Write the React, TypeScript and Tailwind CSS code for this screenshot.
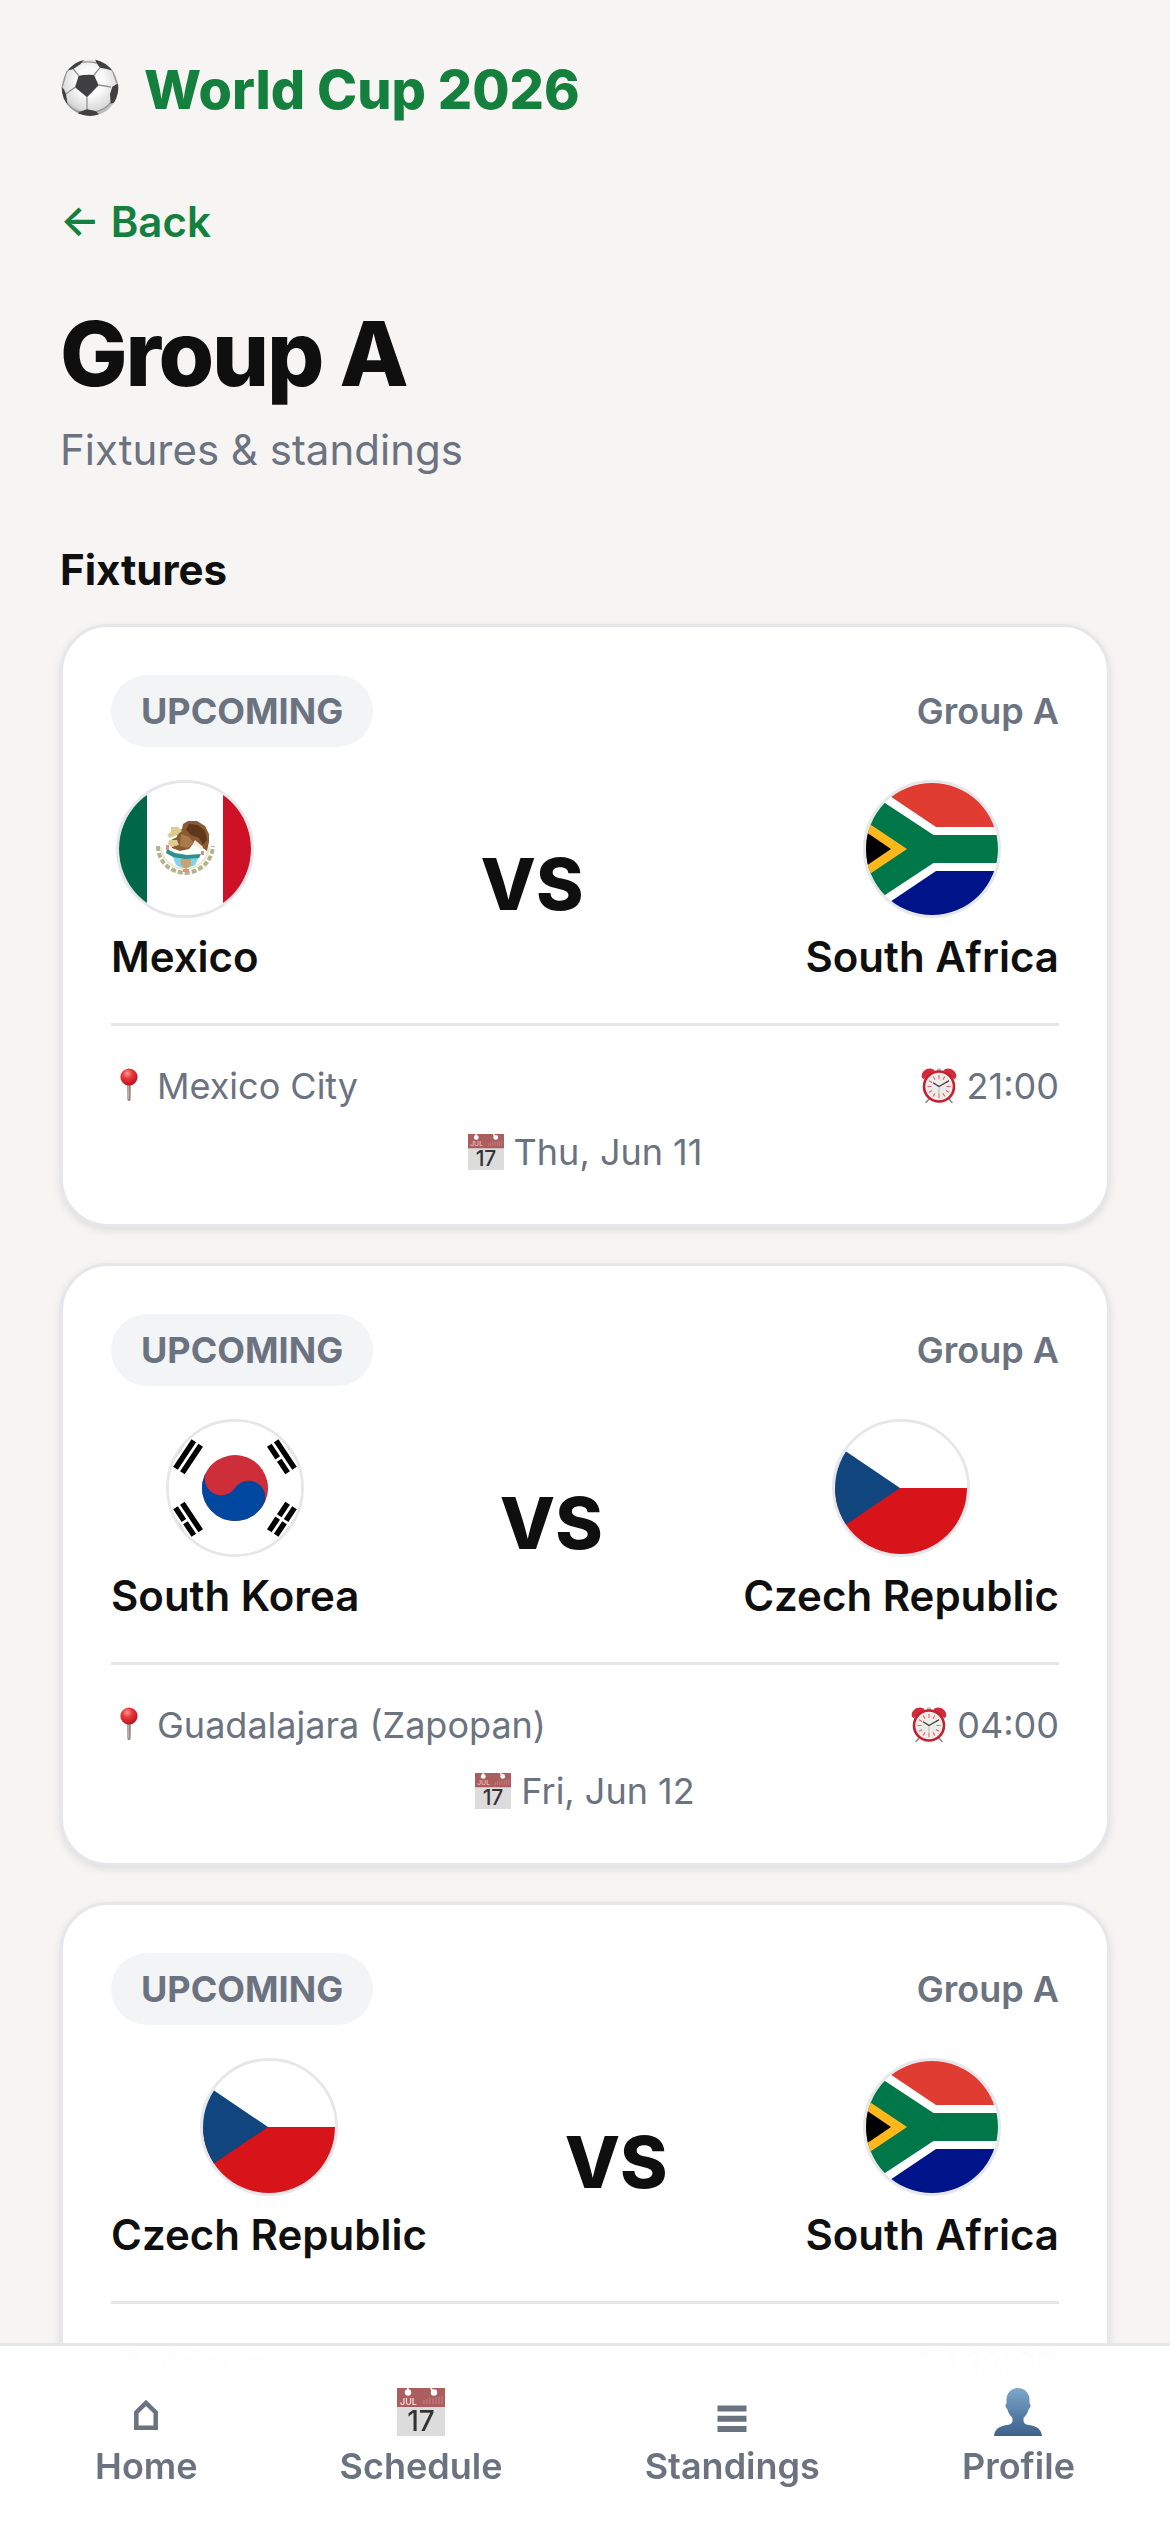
import type { ReactNode } from 'react'

type FlagCode = 'mx' | 'za' | 'kr' | 'cz'

interface Team {
  name: string
  flag: FlagCode
}

interface Fixture {
  id:    number
  home:  Team
  away:  Team
  city:  string
  time:  string
  date:  string
}

const MEXICO: Team       = { name: 'Mexico', flag: 'mx' }
const SOUTH_AFRICA: Team = { name: 'South Africa', flag: 'za' }
const SOUTH_KOREA: Team  = { name: 'South Korea', flag: 'kr' }
const CZECHIA: Team      = { name: 'Czech Republic', flag: 'cz' }

const fixtures: Fixture[] = [
  { id: 1, home: MEXICO, away: SOUTH_AFRICA, city: 'Mexico City', time: '21:00', date: 'Thu, Jun 11' },
  { id: 2, home: SOUTH_KOREA, away: CZECHIA, city: 'Guadalajara (Zapopan)', time: '04:00', date: 'Fri, Jun 12' },
  { id: 3, home: CZECHIA, away: SOUTH_AFRICA, city: 'Atlanta', time: '18:00', date: 'Thu, Jun 18' },
]

/* Flags, all drawn on a 132x132 square and clipped by the round frame */

function FlagMexico() {
  return (
    <>
      <path fill="#fff" d="M0 0h132v132H0z" />
      <path fill="#006847" d="M0 0h28v132H0z" />
      <path fill="#ce1126" d="M104 0h28v132h-28z" />
      {/* wreath */}
      <path d="M39 63c0 15 11 26 27 27 16-1 27-12 28-27" fill="none" stroke="#b3b38c" strokeWidth="4" strokeDasharray="5 2" />
      <path d="M42 64c1 12 10 21 24 22 14-1 23-10 24-22" fill="none" stroke="#e9e6cf" strokeWidth="2" />
      {/* lake */}
      <path fill="#7fd3ea" d="M54 74h26l-4 8-7 3h-6l-6-3z" />
      <path fill="#2f8f8c" d="M48 66l8 4 12 2 14-1-2 4-14 1-12-2-7-4z" />
      <path fill="#c9a36b" d="M62 76h10v6l-5 4-5-4z" />
      <path fill="#e58a8a" d="M47 62h3v5h-3zM82 68h3v4h-3zM64 86h6v3h-6z" />
      {/* eagle */}
      <path fill="#8a5a33" d="M64 41l5-3h9l8 5 4 8v8l-2 9-7-5-7-2-4 5-9 2-8-3-1-8 6-3 1-6 4-2z" />
      <path fill="#5e3818" d="M70 41l9 1 7 6 2 9-4 5-4-7-8-3-5-5z" />
      <path fill="#a97a4a" d="M62 51l8 3 5 6-6 5-8-2z" />
      <path fill="#dccb8a" d="M52 44h7l4 4-5 4-7 3-3-3 4-3zM50 57h8l2 5-7 2-4-3z" />
      <path fill="#f4efe4" d="M76 57l8 7-1 3-9-6z" />
    </>
  )
}

function FlagSouthAfrica() {
  return (
    <>
      <path fill="#fff" d="M0 0h132v132H0z" />
      <path fill="#e03c31" d="M4.500 0H132v44H70z" />
      <path fill="#001489" d="M4.500 132H132V88H70z" />
      <path fill="#007749" d="M0 7.500L67.500 52H132v28H67.500L0 124.500z" />
      <path fill="#ffb81c" d="M0 38.500L41 66 0 93.500z" />
      <path fill="#000" d="M0 49l25 17L0 83z" />
    </>
  )
}

function FlagKorea() {
  return (
    <>
      <path fill="#fff" d="M0 0h132v132H0z" />
      <g transform="translate(66 66) scale(1.375)">
        <path
          transform="rotate(33.69)"
          d="M-50-12v24m6 0v-24m6 0v24M38 12V1m0-2v-11m6 0v11m0 2v11m6 0V1m0-2v-11"
          fill="none"
          stroke="#000"
          strokeWidth="4"
        />
        <path
          transform="rotate(-33.69)"
          d="M-50-12v24m6 0V1m0-2v-11m6 0v24M38 12V1m0-2v-11m6 0v24m6 0V1m0-2v-11"
          fill="none"
          stroke="#000"
          strokeWidth="4"
        />
        <g transform="rotate(33.69)">
          <circle r="24" fill="#cd2e3a" />
          <path fill="#0047a0" d="M-24 0A12 12 0 0 0 0 0A12 12 0 0 1 24 0A24 24 0 0 1-24 0z" />
        </g>
      </g>
    </>
  )
}

function FlagCzech() {
  return (
    <>
      <path fill="#fff" d="M0 0h132v66H0z" />
      <path fill="#d7141a" d="M0 66h132v66H0z" />
      <path fill="#11457e" d="M0 22l65 44L0 110z" />
    </>
  )
}

const FLAGS: Record<FlagCode, () => ReactNode> = {
  mx: FlagMexico,
  za: FlagSouthAfrica,
  kr: FlagKorea,
  cz: FlagCzech,
}

function Flag({ team }: { team: Team }) {
  const Drawing = FLAGS[team.flag]
  return (
    <span className="block size-[138px] overflow-hidden rounded-full border-3 border-[#e5e7eb] bg-white">
      <svg viewBox="0 0 132 132" className="block size-full" role="img" aria-label={`${team.name} flag`}>
        <Drawing />
      </svg>
    </span>
  )
}

/* Icons */

function BallIcon() {
  return (
    <svg viewBox="15 15 180 180" className="size-[60px] shrink-0 overflow-visible" aria-hidden="true">
      <defs>
        <radialGradient id="ball" cx="0.5" cy="0.4" r="0.62">
          <stop offset="0.4" stopColor="#fafafa" />
          <stop offset="0.8" stopColor="#dadada" />
          <stop offset="1" stopColor="#a6a6a6" />
        </radialGradient>
        <clipPath id="ball-edge">
          <circle cx="105" cy="98" r="85" />
        </clipPath>
      </defs>
      <circle cx="105" cy="98" r="85" fill="url(#ball)" />
      <g clipPath="url(#ball-edge)">
        <path
          d="M71 62L55 42M117 60l18-22M131 90l37 6M96 127v38M60 97l-28 20M80 22q20-4 45 2M172 45l14 40M37 145q14 20 40 27M167 143q-14 20-46 28M35 48L22 95"
          stroke="#949494"
          strokeWidth="4"
          fill="none"
        />
        <g fill="#404042">
          <path d="M71 62q23-4 46-2l14 31-35 36-36-30z" />
          <path d="M32 55l4-20 22-20 32-4-14 17-21 14-14 4z" />
          <path d="M120 12l30 8 26 28-21-6-20-4-11-15z" />
          <path d="M194 82l-22 13-7 23 2 28 14-4 14-32z" />
          <path d="M18 92l10 13 5 13 5 32-18-25z" />
          <path d="M72 171l24-8 25 5 12 10-33 12-34-10z" />
        </g>
      </g>
    </svg>
  )
}

function PinIcon() {
  return (
    <svg viewBox="0 0 36 36" className="size-9 shrink-0" aria-hidden="true">
      <defs>
        <radialGradient id="pin" cx="0.4" cy="0.3" r="0.7">
          <stop offset="0" stopColor="#ff9a94" />
          <stop offset="0.4" stopColor="#e93a3a" />
          <stop offset="1" stopColor="#b81220" />
        </radialGradient>
      </defs>
      <path fill="#94867f" d="M16.200 16h3.600l-.2 15.500a1.600 1.600 0 0 1-3.200 0z" />
      <path fill="#bdb0aa" d="M17 17h1v14h-1z" />
      <circle cx="18" cy="9" r="8.600" fill="url(#pin)" />
    </svg>
  )
}

function ClockIcon() {
  return (
    <svg viewBox="0 0 36 36" className="size-9 shrink-0" aria-hidden="true">
      <path stroke="#8b8b8b" strokeWidth="1.600" strokeLinecap="round" d="M8 31l-3 3.500M28 31l3 3.500" />
      <path fill="#bdbdbd" d="M16 .500h4v2.500h-4z" />
      <path fill="#d22b3c" d="M1 9.500C-.5 5 4 .500 9 .500c2.500 0 4 1 4.500 2.200L3.500 10.500c-1 .8-2 .4-2.500-1zM35 9.500C36.500 5 32 .500 27 .500c-2.500 0-4 1-4.500 2.200l10 7.800c1 .8 2 .4 2.500-1z" />
      <circle cx="18" cy="18.500" r="15" fill="#ececea" stroke="#c5202f" strokeWidth="2.600" />
      <path
        stroke="#f0606b"
        strokeWidth="1.100"
        d="M18 7v4M18 26v4M6.500 18.500h4M25.500 18.500h4M12.200 8.500l1.800 3.100M23.800 8.500L22 11.600M12.200 28.500l1.800-3.100M23.800 28.500L22 25.400M8 12.700l3.100 1.800M28 12.700l-3.100 1.800M8 24.300l3.100-1.800M28 24.300l-3.100-1.800"
      />
      <path stroke="#c9bda0" strokeWidth="1" d="M18 18.500V28" />
      <path stroke="#3b3b3b" strokeWidth="1.300" strokeLinecap="round" d="M18 18.500l-5.500-3.500M18 18.500l9.500-5.500" />
    </svg>
  )
}

function CalendarIcon({ className }: { className: string }) {
  return (
    <svg viewBox="0 0 48 48" className={className} aria-hidden="true">
      <path fill="#dcdcdc" d="M0 0h48v48H0z" />
      <path fill="#ac5d5d" d="M0 0h48v19H0z" />
      <g fill="#fff">
        <path d="M10 0h1.800v4H10zM33 0h1.800l2.500 4-2 1z" />
        <circle cx="11" cy="4.500" r="3.200" />
        <circle cx="37" cy="4.500" r="3.200" />
      </g>
      <path stroke="#c58585" strokeWidth="1" d="M27 12v4M30 11v5M33 10v6M36 10v6M39 9v7M42 9v7M45 8v8" />
      <text x="3" y="16.500" fontSize="9" fill="#f3d5d5">JUL</text>
      <text x="24" y="43" fontSize="28" fontWeight="500" fill="#333" textAnchor="middle">17</text>
    </svg>
  )
}

function HomeIcon() {
  return (
    <svg viewBox="0 0 48 48" className="size-12" fill="none" stroke="currentColor" strokeWidth="4.500" aria-hidden="true">
      <path d="M14.300 39.800V24.500L24 15l9.700 9.500v15.300z" />
    </svg>
  )
}

function ListIcon() {
  return (
    <svg viewBox="0 0 48 48" className="size-12" fill="currentColor" aria-hidden="true">
      <path d="M9.500 17.500h29v6h-29zM9.500 27.700h29v6h-29zM9.500 37.900h29v6h-29z" />
    </svg>
  )
}

function PersonIcon() {
  return (
    <svg viewBox="0 0 48 48" className="size-12" aria-hidden="true">
      <defs>
        <linearGradient id="person" x1="0" y1="0" x2="0" y2="1">
          <stop offset="0" stopColor="#7fa8cb" />
          <stop offset="0.75" stopColor="#4a7099" />
          <stop offset="1" stopColor="#41638a" />
        </linearGradient>
      </defs>
      <path
        fill="url(#person)"
        d="M24 0c7 0 11.500 5 11.500 12v3.500c1.500.5 1.300 4-.7 5.500-1 4-3 6.500-5 8.500-.8 3-.3 6 2.700 7 7 1.500 14.500 2 15.500 11.500H0c1-9.500 8.500-10 15.500-11.500 3-1 3.500-4 2.700-7-2-2-4-4.500-5-8.500-2-1.500-2.200-5-.7-5.500V12C12.500 5 17 0 24 0z"
      />
    </svg>
  )
}

const navItems = [
  { label: 'Home',      href: '#home',      icon: <HomeIcon /> },
  { label: 'Schedule',  href: '#schedule',  icon: <CalendarIcon className="size-12 overflow-visible" /> },
  { label: 'Standings', href: '#standings', icon: <ListIcon /> },
  { label: 'Profile',   href: '#profile',   icon: <PersonIcon /> },
]

function TeamBlock({ team }: { team: Team }) {
  return (
    <div className="flex flex-col items-center gap-[9px]">
      <Flag team={team} />
      <span className="text-[42px] leading-[60px] font-semibold">{team.name}</span>
    </div>
  )
}

function FixtureCard({ fixture }: { fixture: Fixture }) {
  return (
    <li className="rounded-[48px] border-3 border-[#e5e7eb] bg-white p-12 shadow-[0_3px_9px_rgba(0,0,0,0.1)]">
      <div className="flex items-center justify-between text-[36px] leading-[48px] text-[#6b7280]">
        <span className="rounded-full bg-[#f3f4f6] px-[30px] py-3 font-bold">UPCOMING</span>
        <span className="font-semibold">Group A</span>
      </div>

      <div className="mt-[33px] flex items-center justify-between">
        <TeamBlock team={fixture.home} />
        <span className="text-[72px] leading-[96px] font-extrabold">VS</span>
        <TeamBlock team={fixture.away} />
      </div>

      <div className="mt-9 flex flex-wrap justify-between gap-y-[18px] border-t-3 border-[#e5e7eb] pt-9 text-[36px] leading-[48px] text-[#6b7280]">
        <span className="flex items-center gap-2.5">
          <PinIcon />
          {fixture.city}
        </span>
        <span className="flex items-center gap-2.5">
          <ClockIcon />
          {fixture.time}
        </span>
        <span className="flex basis-full items-center justify-center gap-2.5">
          <CalendarIcon className="size-9 shrink-0 overflow-visible" />
          {fixture.date}
        </span>
      </div>
    </li>
  )
}

export default function App() {
  return (
    <div className="min-h-screen bg-[#f6f5f3] font-['Inter',sans-serif] text-[#0f0f0f]">
      <header className="flex items-center gap-6 px-[60px] pt-12">
        <BallIcon />
        <span className="text-[54px] leading-[84px] font-extrabold text-[#15803d]">World Cup 2026</span>
      </header>

      <main className="px-[60px] pt-[60px] pb-6">
        <a href="#groups" className="inline-block align-top text-[42px] leading-[60px] font-semibold text-[#15803d]">
          ← Back
        </a>

        <h1 className="mt-12 text-[90px] leading-[108px] font-extrabold tracking-tight">Group A</h1>
        <p className="mt-3 text-[42px] leading-[60px] text-[#6b7280]">Fixtures &amp; standings</p>

        <section className="mt-[60px]">
          <h2 className="text-[42px] leading-[60px] font-bold">Fixtures</h2>
          <ul className="mt-6 flex flex-col gap-9">
            {fixtures.map((fixture) => (
              <FixtureCard key={fixture.id} fixture={fixture} />
            ))}
          </ul>
        </section>
      </main>

      {/* Bottom navigation */}
      <nav className="fixed inset-x-0 bottom-0 flex justify-around border-t-3 border-[#e5e7eb] bg-white/97 px-6 pt-9 pb-[42px] backdrop-blur-2xl">
        {navItems.map((item) => (
          <a
            key={item.label}
            href={item.href}
            className="flex flex-col items-center text-[36px] leading-[48px] font-semibold text-[#6b7280]"
          >
            <span className="flex h-[60px] items-center">{item.icon}</span>
            {item.label}
          </a>
        ))}
      </nav>
    </div>
  )
}
